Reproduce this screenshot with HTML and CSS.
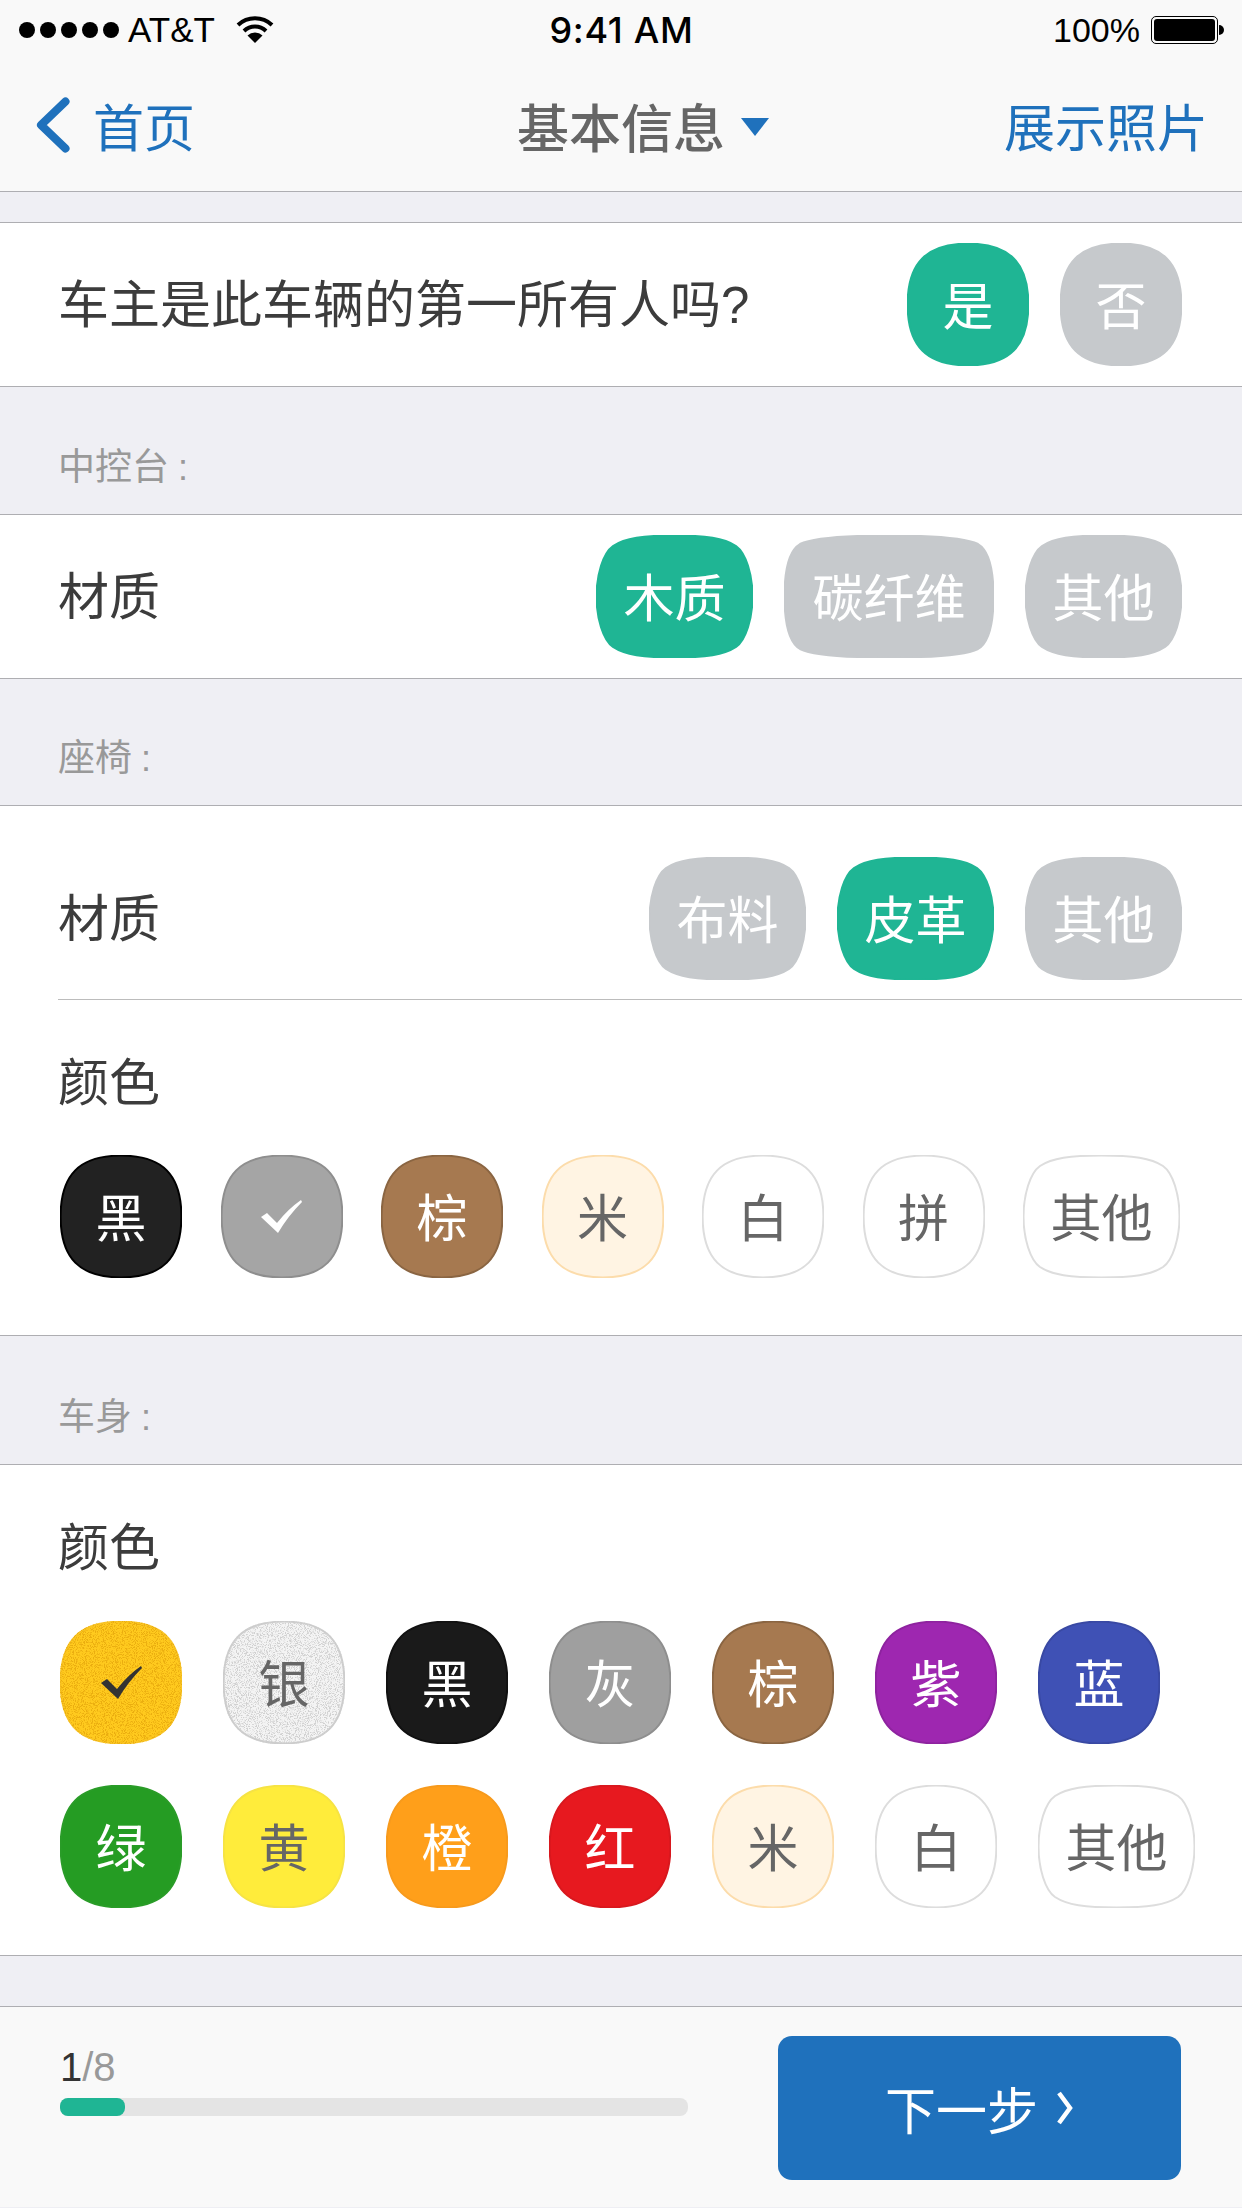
FILE: index.html
```html
<!DOCTYPE html>
<html lang="zh-CN">
  <head>
    <meta charset="UTF-8" />
    <meta name="viewport" content="width=device-width, initial-scale=1.0" />
    <title>基本信息</title>
    <link rel="stylesheet" href="styles.css">
  </head>
  <body>
    <!-- shared chip shapes and grain -->
    <svg class="defs" width="0" height="0">
      <defs>
        <symbol id="sq" viewBox="0 0 100 100" preserveAspectRatio="none">
          <path vector-effect="non-scaling-stroke" d="M50 0.5C84 0.5 99.5 16 99.5 50C99.5 84 84 99.5 50 99.5C16 99.5 0.5 84 0.5 50C0.5 16 16 0.5 50 0.5Z" />
        </symbol>
        <symbol id="sq-m" viewBox="0 0 157 123" preserveAspectRatio="none">
          <path vector-effect="non-scaling-stroke" d="M78.500 0.500C110 0.500 128 3 140 11C150 18 156.500 40 156.500 61.500C156.500 83 150 105 140 112C128 120 110 122.500 78.500 122.500C47 122.500 29 120 17 112C7 105 0.500 83 0.500 61.500C0.500 40 7 18 17 11C29 3 47 0.500 78.500 0.500Z" />
        </symbol>
        <symbol id="sq-w" viewBox="0 0 210 123" preserveAspectRatio="none">
          <path vector-effect="non-scaling-stroke" d="M105 0.500C150 0.500 182 3 194 9C206 16 209.500 38 209.500 61.500C209.500 85 206 107 194 114C182 120 150 122.500 105 122.500C60 122.500 28 120 16 114C4 107 0.500 85 0.500 61.500C0.500 38 4 16 16 9C28 3 60 0.500 105 0.500Z" />
        </symbol>
        <filter id="grain-gold" x="0" y="0" width="100%" height="100%" color-interpolation-filters="sRGB">
          <feTurbulence type="fractalNoise" baseFrequency="1.1" numOctaves="2" seed="4" result="noise" />
          <feColorMatrix in="noise" type="matrix" values="0 0 0 0 0.92  0 0 0 0 0.68  0 0 0 0 0.06  0 0 0 6 -2.9" result="dots" />
          <feComposite in="dots" in2="SourceAlpha" operator="in" result="clipped" />
          <feMerge>
            <feMergeNode in="SourceGraphic" />
            <feMergeNode in="clipped" />
          </feMerge>
        </filter>
        <filter id="grain-silver" x="0" y="0" width="100%" height="100%" color-interpolation-filters="sRGB">
          <feTurbulence type="fractalNoise" baseFrequency="1.1" numOctaves="2" seed="9" result="noise" />
          <feColorMatrix in="noise" type="matrix" values="0 0 0 0 0.82  0 0 0 0 0.82  0 0 0 0 0.82  0 0 0 6 -2.9" result="dots" />
          <feComposite in="dots" in2="SourceAlpha" operator="in" result="clipped" />
          <feMerge>
            <feMergeNode in="SourceGraphic" />
            <feMergeNode in="clipped" />
          </feMerge>
        </filter>
      </defs>
    </svg>

    <div class="top">
      <div class="status">
        <div class="status-left">
          <span class="dots"><i></i><i></i><i></i><i></i><i></i></span>
          <span class="carrier">AT&amp;T</span>
          <svg class="wifi" viewBox="0 0 38 27" width="38" height="27">
            <path class="wifi-arc" d="M2 9A25 25 0 0 1 36 9" />
            <path class="wifi-arc" d="M8 15A16 16 0 0 1 30 15" />
            <path d="M19 27L11.500 19.500A11 11 0 0 1 26.500 19.500Z" />
          </svg>
        </div>
        <div class="clock">9:41 AM</div>
        <div class="status-right">
          <span class="pct">100%</span>
          <span class="battery"><i></i></span>
          <span class="battery-tip"></span>
        </div>
      </div>
      <div class="nav">
        <a class="back">
          <svg viewBox="0 0 34 56" width="34" height="56">
            <path d="M29.500 4.500L5 28L29.500 51.500" />
          </svg>
          <span>首页</span>
        </a>
        <div class="title">基本信息<span class="caret"></span></div>
        <a class="photos">展示照片</a>
      </div>
    </div>

    <div class="gap gap-first"></div>
    <div class="row row-q">
      <div class="row-label">车主是此车辆的第一所有人吗?</div>
      <div class="chips">
        <div class="chip on"><svg><use href="#sq" /></svg><span>是</span></div>
        <div class="chip"><svg><use href="#sq" /></svg><span>否</span></div>
      </div>
    </div>

    <div class="gap gap-a"><span>中控台<em>:</em></span></div>
    <div class="row row-q">
      <div class="row-label">材质</div>
      <div class="chips">
        <div class="chip on"><svg><use href="#sq-m" /></svg><span>木质</span></div>
        <div class="chip chip-wide"><svg><use href="#sq-w" /></svg><span>碳纤维</span></div>
        <div class="chip"><svg><use href="#sq-m" /></svg><span>其他</span></div>
      </div>
    </div>

    <div class="gap gap-b"><span>座椅<em>:</em></span></div>
    <div class="block">
      <div class="row-inner">
        <div class="row-label">材质</div>
        <div class="chips">
          <div class="chip"><svg><use href="#sq-m" /></svg><span>布料</span></div>
          <div class="chip on"><svg><use href="#sq-m" /></svg><span>皮革</span></div>
          <div class="chip"><svg><use href="#sq-m" /></svg><span>其他</span></div>
        </div>
      </div>
      <div class="colors colors-seat">
        <div class="row-label">颜色</div>
        <div class="swatches">
          <div class="chip black"><svg><use href="#sq" /></svg><span>黑</span></div>
          <div class="chip gray"><svg><use href="#sq" /></svg>
            <svg class="check" viewBox="0 0 41 33"><path d="M0 17L6 13L16 23Q27 9 40 0L41 2Q27 16 17 33Z" /></svg>
          </div>
          <div class="chip brown"><svg><use href="#sq" /></svg><span>棕</span></div>
          <div class="chip beige"><svg><use href="#sq" /></svg><span>米</span></div>
          <div class="chip white"><svg><use href="#sq" /></svg><span>白</span></div>
          <div class="chip white"><svg><use href="#sq" /></svg><span>拼</span></div>
          <div class="chip white"><svg><use href="#sq-m" /></svg><span>其他</span></div>
        </div>
      </div>
    </div>

    <div class="gap"><span>车身<em>:</em></span></div>
    <div class="block">
      <div class="colors colors-body">
        <div class="row-label">颜色</div>
        <div class="swatches">
          <div class="chip gold"><svg><use href="#sq" /></svg>
            <svg class="check" viewBox="0 0 41 33"><path d="M0 17L6 13L16 23Q27 9 40 0L41 2Q27 16 17 33Z" /></svg>
          </div>
          <div class="chip silver"><svg><use href="#sq" /></svg><span>银</span></div>
          <div class="chip jet"><svg><use href="#sq" /></svg><span>黑</span></div>
          <div class="chip ash"><svg><use href="#sq" /></svg><span>灰</span></div>
          <div class="chip brown"><svg><use href="#sq" /></svg><span>棕</span></div>
          <div class="chip purple"><svg><use href="#sq" /></svg><span>紫</span></div>
          <div class="chip blue"><svg><use href="#sq" /></svg><span>蓝</span></div>
        </div>
        <div class="swatches">
          <div class="chip green"><svg><use href="#sq" /></svg><span>绿</span></div>
          <div class="chip yellow"><svg><use href="#sq" /></svg><span>黄</span></div>
          <div class="chip orange"><svg><use href="#sq" /></svg><span>橙</span></div>
          <div class="chip red"><svg><use href="#sq" /></svg><span>红</span></div>
          <div class="chip beige"><svg><use href="#sq" /></svg><span>米</span></div>
          <div class="chip white"><svg><use href="#sq" /></svg><span>白</span></div>
          <div class="chip white"><svg><use href="#sq-m" /></svg><span>其他</span></div>
        </div>
      </div>
    </div>

    <div class="gap gap-last"></div>
    <div class="footer">
      <div class="progress">
        <div class="count"><b>1</b>/8</div>
        <div class="bar"><div class="fill"></div></div>
      </div>
      <a class="next">
        <span>下一步</span>
        <svg viewBox="0 0 18 34" width="18" height="34"><path d="M3 2L14 17L3 32" /></svg>
      </a>
    </div>
  </body>
</html>
```

FILE: styles.css
```css
* {
  margin: 0;
  padding: 0;
  box-sizing: border-box;
}
body {
  width: 1242px;
  height: 2208px;
  overflow: hidden;
  background-color: #efeff4;
  color: #3c3c3c;
  font-family: "Liberation Sans", "Noto Sans CJK SC", sans-serif;
  font-size: 51px;
}
.defs {
  position: absolute;
}

/* status bar + nav */
.top {
  height: 192px;
  background-color: #f9f9f9;
  border-bottom: 1px solid #aeaeb2;
}
.status {
  height: 60px;
  padding: 0 18px 0 19px;
  display: grid;
  grid-template-columns: 1fr auto 1fr;
  align-items: center;
  color: #000000;
  font-size: 34px;
}
.status-left,
.status-right {
  display: flex;
  align-items: center;
}
.status-right {
  justify-content: flex-end;
}
.dots {
  display: flex;
  gap: 5px;
}
.dots i {
  width: 16px;
  height: 16px;
  border-radius: 50%;
  background-color: #000000;
}
.carrier {
  margin-left: 9px;
  font-size: 35px;
}
.wifi {
  margin-left: 21px;
  margin-top: -1px;
}
.wifi-arc {
  fill: none;
  stroke: #000000;
  stroke-width: 4;
}
.clock {
  font-family: Inter, sans-serif;
  font-weight: 500;
  font-size: 36px;
  letter-spacing: 0.700px;
}
.pct {
  margin-right: 11px;
}
.battery {
  width: 67px;
  height: 28px;
  padding: 2px;
  border: 1px solid #000000;
  border-radius: 5px;
}
.battery i {
  display: block;
  height: 100%;
  background-color: #000000;
  border-radius: 3px;
}
.battery-tip {
  width: 5px;
  height: 10px;
  margin-left: 1px;
  background-color: #000000;
  border-radius: 0 5px 5px 0;
}
.nav {
  height: 130px;
  padding-left: 36px;
  display: grid;
  grid-template-columns: 481px 487px auto;
  align-items: center;
  color: #1f71bc;
}
.back {
  display: flex;
  align-items: center;
  gap: 23px;
}
.back path {
  fill: none;
  stroke: #1f71bc;
  stroke-width: 8;
  stroke-linecap: round;
  stroke-linejoin: round;
}
.title {
  display: flex;
  align-items: center;
  color: #666666;
  font-size: 52px;
  font-weight: 500;
}
.caret {
  margin-left: 16px;
  margin-top: 4px;
  border-top: 18px solid #1f71bc;
  border-left: 14px solid transparent;
  border-right: 14px solid transparent;
}

/* grey bands between groups */
.gap {
  height: 128px;
  padding: 0 58px 20px;
  display: flex;
  align-items: flex-end;
  color: #999999;
  font-size: 37px;
  line-height: 52px;
}
.gap em {
  margin-left: 9px;
  font-size: 36px;
  font-style: normal;
}
.gap-a {
  height: 127px;
}
.gap-b {
  height: 126px;
}
.gap-first {
  height: 30px;
}
.gap-last {
  height: 50px;
}

.row {
  display: flex;
  justify-content: space-between;
  align-items: center;
  padding: 0 60px 0 58px;
  background-color: #ffffff;
  border-top: 1px solid #aeaeb2;
  border-bottom: 1px solid #aeaeb2;
}
.row-q {
  height: 165px;
}
.row-q .row-label {
  padding-top: 3px;
}
.block {
  background-color: #ffffff;
  border-top: 1px solid #aeaeb2;
  border-bottom: 1px solid #aeaeb2;
}
.row-inner {
  height: 194px;
  margin-left: 58px;
  padding: 32px 60px 0 0;
  display: flex;
  justify-content: space-between;
  align-items: center;
  border-bottom: 1px solid #bcbcbc;
}
.row-inner .row-label {
  padding-top: 3px;
}
.row-label {
  line-height: 70px;
}
.chips {
  display: flex;
  gap: 31px;
}
.chip {
  position: relative;
  min-width: 122px;
  height: 123px;
  padding: 0 27.500px 4px;
  display: flex;
  justify-content: center;
  align-items: center;
  color: #ffffff;
  --f: #c6c9cc;
  --s: #c6c9cc;
}
.chip-wide {
  padding: 0 28.500px 4px;
}
.chip > svg:first-child {
  position: absolute;
  left: 0;
  top: 0;
  width: 100%;
  height: 100%;
  overflow: visible;
  fill: var(--f);
  stroke: var(--s);
  stroke-width: 2;
}
.chip span {
  position: relative;
}
.chip.on {
  --f: #1fb594;
  --s: #1fb594;
}
.check {
  position: relative;
  width: 41px;
  height: 33px;
  margin-top: 4px;
  fill: #ffffff;
}

/* colour swatches */
.colors {
  padding: 0 0 0 60px;
}
.colors .row-label {
  margin-left: -2px;
}
.colors-seat {
  height: 335px;
  padding-top: 49px;
}
.colors-body {
  height: 490px;
  padding-top: 49px;
}
.swatches {
  display: flex;
  margin-top: 36px;
}
.colors-seat .swatches {
  gap: 38.500px;
}
.colors-body .swatches {
  gap: 41px;
  margin-top: 37px;
}
.colors-body .swatches + .swatches {
  margin-top: 41px;
}
.black { --f: #222222; --s: #000000; }
.jet { --f: #1a1a1a; --s: #111111; }
.gray { --f: #a5a5a5; --s: #8e8e8e; }
.ash { --f: #9f9f9f; --s: #8e8e8e; color: #ffffff; }
.brown { --f: #a67950; --s: #8a6542; }
.beige { --f: #fff4e3; --s: #fcdcab; color: #666666; }
.white { --f: #ffffff; --s: #dddddd; color: #666666; }
.gold { --f: #ffca1e; --s: #f9c425; }
.gold .check { fill: #333333; }
.gold > svg:first-child { filter: url(#grain-gold); }
.silver { --f: #f4f4f4; --s: #cccccc; color: #666666; }
.silver > svg:first-child { filter: url(#grain-silver); }
.purple { --f: #9e27b0; --s: #8e239f; }
.blue { --f: #3f51b5; --s: #3949a3; }
.green { --f: #259c23; --s: #2a9c28; }
.yellow { --f: #ffec3b; --s: #f6e344; color: #666666; }
.orange { --f: #ff9f1a; --s: #f79a1c; }
.red { --f: #e7191f; --s: #d8181e; }

/* bottom bar */
.footer {
  height: 201px;
  padding: 29px 61px 0 60px;
  display: flex;
  justify-content: space-between;
  align-items: flex-start;
  background-color: #f9f9f9;
  border-top: 1px solid #aeaeb2;
}
.progress {
  width: 628px;
  padding-top: 9px;
}
.count {
  color: #999999;
  font-size: 40px;
  line-height: 44px;
}
.count b {
  color: #333333;
  font-weight: 400;
}
.bar {
  height: 18px;
  margin-top: 9px;
  background-color: #e4e4e4;
  border-radius: 8px;
}
.fill {
  width: 65px;
  height: 100%;
  background-color: #1fb594;
  border-radius: 8px;
}
.next {
  width: 403px;
  height: 144px;
  display: flex;
  justify-content: center;
  align-items: center;
  gap: 18px;
  color: #ffffff;
  background-color: #1f71bc;
  border-radius: 14px;
}
.next path {
  fill: none;
  stroke: #ffffff;
  stroke-width: 4.500;
}
```
